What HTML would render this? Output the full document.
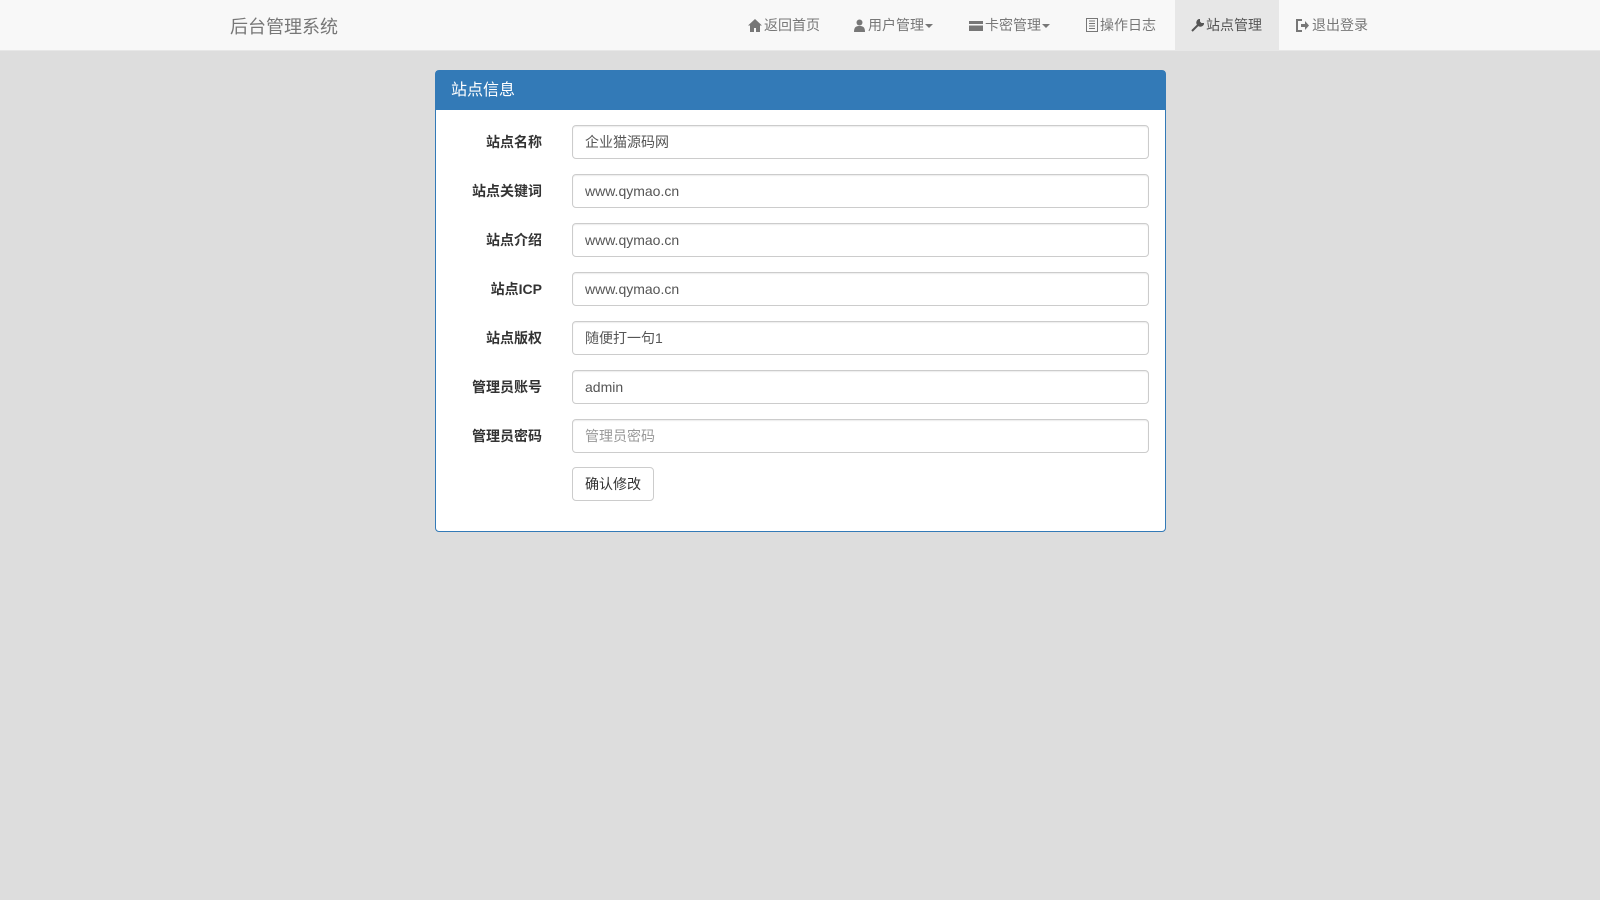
<!DOCTYPE html>
<html><head><meta charset="utf-8"><style>
body{margin:0;background:#ddd;font-family:"Liberation Sans","Noto Sans CJK SC",sans-serif;font-size:14px;color:#333;width:1600px;height:900px;overflow:hidden;position:relative}
.nav{position:absolute;left:0;top:0;width:1600px;height:50px;background:#f8f8f8;border-bottom:1px solid #e7e7e7}
.brand{position:absolute;left:230px;top:13px;font-size:18px;color:#777}
.item{position:absolute;top:0;height:50px;line-height:50px;color:#777;font-size:14px;white-space:nowrap}
.item svg{vertical-align:-2px;margin-right:2px}
.active{background:#e7e7e7;color:#555}
.caret{display:inline-block;border-top:4px solid #777;border-left:4px solid transparent;border-right:4px solid transparent;vertical-align:middle;margin-left:1px}
.panel{position:absolute;left:435px;top:70px;width:731px;height:462px;background:#fff;border:1px solid #337ab7;border-radius:4px;box-sizing:border-box}
.ph{background:#337ab7;color:#fff;height:39px;line-height:39px;padding-left:15px;font-size:16px}
.lbl{position:absolute;right:623px;font-weight:bold;font-size:14px;text-align:right;width:120px}
.inp{position:absolute;left:136px;width:577px;height:34px;border:1px solid #ccc;border-radius:4px;box-sizing:border-box;padding-left:12px;line-height:32px;color:#555;font-size:14px;box-shadow:inset 0 1px 1px rgba(0,0,0,.075)}
.btn{position:absolute;left:136px;top:396px;width:82px;height:34px;border:1px solid #ccc;border-radius:4px;box-sizing:border-box;text-align:center;line-height:32px;font-size:14px;color:#333}
</style></head><body>
<div class="nav">
<div class="brand">后台管理系统</div>
<div class="item" style="left:748px"><svg width="14" height="13" viewBox="0 0 14 13"><path d="M7 0L0 6.5h2V13h4V9h2v4h4V6.5h2z" fill="#777"/></svg>返回首页</div>
<div class="item" style="left:853px"><svg width="13" height="13" viewBox="0 0 13 13"><circle cx="6.5" cy="3.5" r="3" fill="#777"/><path d="M1 13c0-5 2-6 5.5-6S12 8 12 13z" fill="#777"/></svg>用户管理<span class="caret"></span></div>
<div class="item" style="left:969px"><svg width="14" height="12" viewBox="0 0 14 12"><rect x="0" y="1" width="14" height="10" fill="#777"/><rect x="0" y="4" width="14" height="1.5" fill="#f8f8f8"/></svg>卡密管理<span class="caret"></span></div>
<div class="item" style="left:1086px"><svg width="12" height="14" viewBox="0 0 12 14"><rect x="0.5" y="0.5" width="11" height="13" fill="none" stroke="#777"/><path d="M3 3h6M3 5.5h6M3 8h6M3 10.5h6" stroke="#777"/></svg>操作日志</div>
<div class="item active" style="left:1175px;width:104px;padding-left:16px;box-sizing:border-box"><svg width="13" height="13" viewBox="0 0 13 13"><path d="M1 12L7 6M8 1a3 3 0 1 0 4 4L10 5 8 3z" stroke="#555" stroke-width="2" fill="#555"/></svg>站点管理</div>
<div class="item" style="left:1296px"><svg width="14" height="13" viewBox="0 0 14 13"><path d="M6 1H1v11h5" stroke="#777" stroke-width="2" fill="none"/><path d="M5 5h4V2l4 4.5-4 4.5V8H5z" fill="#777"/></svg>退出登录</div>
</div>
<div class="panel">
<div class="ph">站点信息</div>
<div class="lbl" style="top:61px">站点名称</div><div class="inp" style="top:54px">企业猫源码网</div>
<div class="lbl" style="top:110px">站点关键词</div><div class="inp" style="top:103px">www.qymao.cn</div>
<div class="lbl" style="top:159px">站点介绍</div><div class="inp" style="top:152px">www.qymao.cn</div>
<div class="lbl" style="top:208px">站点ICP</div><div class="inp" style="top:201px">www.qymao.cn</div>
<div class="lbl" style="top:257px">站点版权</div><div class="inp" style="top:250px">随便打一句1</div>
<div class="lbl" style="top:306px">管理员账号</div><div class="inp" style="top:299px">admin</div>
<div class="lbl" style="top:355px">管理员密码</div><div class="inp" style="top:348px;color:#999">管理员密码</div>
<div class="btn">确认修改</div>
</div>
</body></html>
